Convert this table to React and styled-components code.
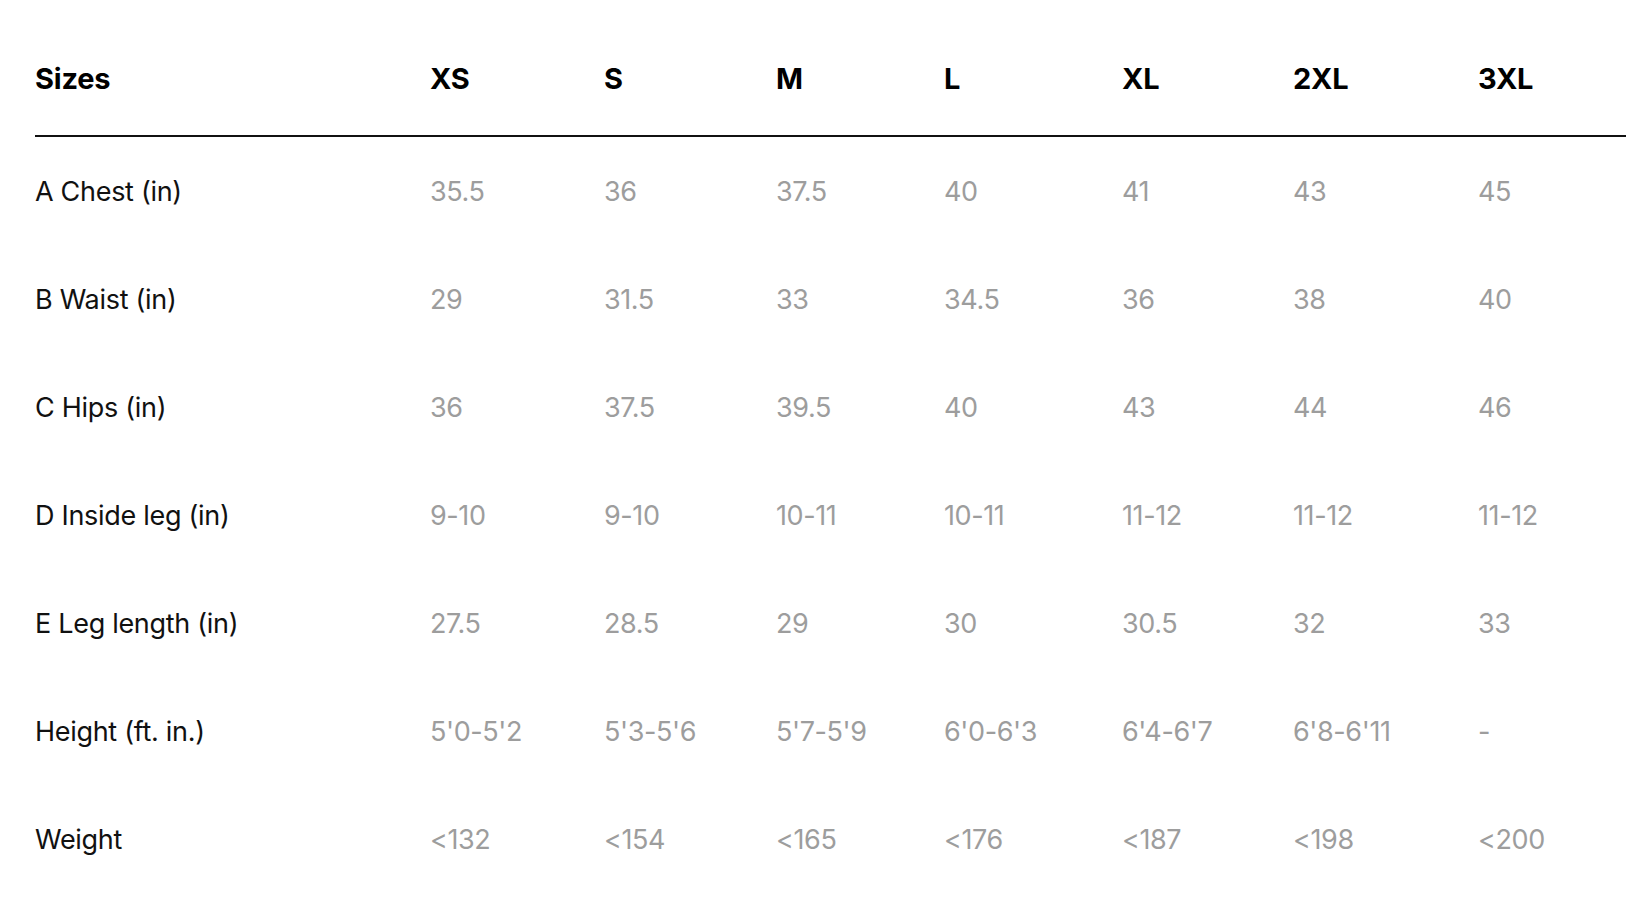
import React from "react";
import styled, { createGlobalStyle } from "styled-components";

const GlobalStyle = createGlobalStyle`
  html, body {
    margin: 0;
    padding: 0;
    background: #fff;
  }
  body {
    font-family: "Inter", "Liberation Sans", sans-serif;
    -webkit-font-smoothing: antialiased;
  }
`;

// label + XS..3XL
const COLUMNS = "395px 174px 172px 168px 178px 171px 185px 148px";

const Page = styled.div`
  padding: 25px 0 0 35px;
  width: 1591px;
`;

const Row = styled.div`
  display: grid;
  grid-template-columns: ${COLUMNS};
  align-items: center;
  box-sizing: border-box;
  height: ${(p) => (p.$head ? "112px" : "108px")};
  padding-bottom: ${(p) => (p.$head ? "4px" : "0")};
  border-bottom: ${(p) => (p.$head ? "2px solid #111" : "none")};
`;

const HeadCell = styled.div`
  font-size: 29px;
  font-weight: 700;
  color: #000;
  letter-spacing: -0.2px;
`;

const Label = styled.div`
  font-size: 27px;
  color: #111;
  letter-spacing: -0.3px;
`;

const Value = styled.div`
  font-size: 27px;
  color: #9d9d9d;
  letter-spacing: -0.4px;
`;

const sizes = ["XS", "S", "M", "L", "XL", "2XL", "3XL"];

const rows = [
  { label: "A Chest (in)", values: ["35.5", "36", "37.5", "40", "41", "43", "45"] },
  { label: "B Waist (in)", values: ["29", "31.5", "33", "34.5", "36", "38", "40"] },
  { label: "C Hips (in)", values: ["36", "37.5", "39.5", "40", "43", "44", "46"] },
  { label: "D Inside leg (in)", values: ["9-10", "9-10", "10-11", "10-11", "11-12", "11-12", "11-12"] },
  { label: "E Leg length (in)", values: ["27.5", "28.5", "29", "30", "30.5", "32", "33"] },
  { label: "Height (ft. in.)", values: ["5'0-5'2", "5'3-5'6", "5'7-5'9", "6'0-6'3", "6'4-6'7", "6'8-6'11", "-"] },
  { label: "Weight", values: ["<132", "<154", "<165", "<176", "<187", "<198", "<200"] },
];

function App() {
  return (
    <>
      <GlobalStyle />
      <Page>
        <Row $head>
          <HeadCell>Sizes</HeadCell>
          {sizes.map((s) => (
            <HeadCell key={s}>{s}</HeadCell>
          ))}
        </Row>
        {rows.map((row) => (
          <Row key={row.label}>
            <Label>{row.label}</Label>
            {row.values.map((v, i) => (
              <Value key={i}>{v}</Value>
            ))}
          </Row>
        ))}
      </Page>
    </>
  );
}

export default App;
